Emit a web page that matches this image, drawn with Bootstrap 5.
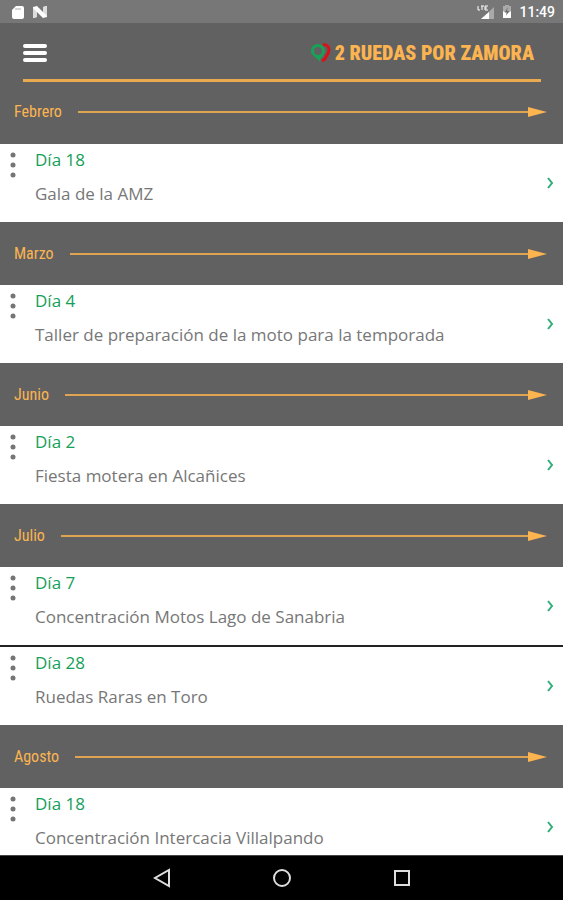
<!DOCTYPE html>
<html lang="es">
<head>
<meta charset="utf-8">
<meta name="viewport" content="width=device-width, initial-scale=1">
<title>2 Ruedas por Zamora</title>
<link href="https://cdn.jsdelivr.net/npm/bootstrap@5.3.0/dist/css/bootstrap.min.css" rel="stylesheet">
<style>
:root { --slate: #616161; --amber: #fbb450; --leaf: #14a057; }
body { font-family: "Open Sans", "Noto Sans", sans-serif; background: var(--slate); }
svg { display: block; flex: none; }
.status { height: 23px; background: #777; font: 500 14px/23px Roboto, sans-serif; padding: 2px 8px 0 11px; }
.app-head { height: 60px; padding: 0 22px 0 23px; background: var(--slate); }
.app-head .top-row { padding: 4px 7px 0 0; }
.rule { height: 3px; background: #e9aa50; }
.brand { color: var(--amber); font: 900 20px/24px "Roboto Condensed", Roboto, sans-serif; }
.month { height: 63px; padding: 0 16px 0 14px; background: var(--slate); color: var(--amber); }
.month:first-child { height: 62px; padding-bottom: 2px; }
.month h2 { font: 400 16px/24px "Roboto Condensed", Roboto, sans-serif; }
.arrow-line { height: 2px; background: #dea452; }
.event { height: 78px; background: #fff; }
.event + .event { height: 80px; border-top: 2px solid #222; }
.kebab { width: 35px; padding: 8px 0 0 10px; color: #757575; }
.event-link { padding: 4px 9px 0 0; color: #777; font-size: 17px; line-height: 24px; }
.event-text { gap: 10px; }
.event-link svg { margin-bottom: 4px; }
.day { color: var(--leaf); }
.sysnav { height: 45px; gap: 102px; background: #000; border-top: 1px solid #444; }
</style>
</head>
<body>
<div class="vh-100 d-flex flex-column overflow-hidden">
  <div class="status d-flex align-items-center text-white">
    <svg width="14" height="16" viewBox="0 0 14 16" aria-hidden="true"><path d="M5 1h6q2 0 2 2v9q0 2-2 2H3q-2 0-2-2V5z" fill="#fff"/><path d="M5 3v2M7 3v2M9 3v2" stroke="#aaa"/></svg>
    <svg class="ms-2" width="15" height="16" viewBox="0 0 15 16" aria-hidden="true"><path d="M0 2l4-1 6 6V2l4-1v11l-4 1-6-6v5l-4 1z" fill="#fff"/><path d="M0 3l4 4v5l-4 1zM10 2l4-1v10l-4-4z" fill="#ddd"/></svg>
    <svg class="ms-auto" width="18" height="16" viewBox="0 0 18 16" aria-hidden="true"><path d="M17 2v12H4z" fill="#aaa"/><path d="M12 7v7H4z" fill="#fff"/><path d="M1 1v4h2M4 1h3M5 1v4M11 1H8v4h3M8 3h2" fill="none" stroke="#fff"/></svg>
    <svg class="mx-1" width="16" height="15" viewBox="-1 0 12 15" aria-hidden="true"><path d="M3 0h4v1h2v12H1V1h2z" fill="#aaa"/><path d="M1 6l4 3 4-3v7H1z" fill="#fff"/><path d="M6 2L3 7h2l-1 4 3-5H5z" fill="#666"/></svg>
    <span>11:49</span>
  </div>

  <header class="app-head d-flex flex-column">
    <div class="top-row d-flex flex-fill align-items-center justify-content-between">
      <button type="button" class="btn p-0 border-0" aria-label="Menú">
        <svg width="24" height="20" viewBox="0 0 24 20"><path d="M2 3h20M2 10h20M2 17h20" stroke="#fff" stroke-width="4" stroke-linecap="round"/></svg>
      </button>
      <a href="#" class="brand d-flex align-items-center text-decoration-none">
        <svg class="me-1" width="20" height="20" viewBox="0 0 20 20" aria-hidden="true"><path d="M12 2c4-1 6 2 6 5 0 4-3 5-4 9l-3 2" fill="none" stroke="#dc1118" stroke-width="3"/><path fill-rule="evenodd" d="M7 1c4 0 7 3 7 7 0 5-5 5-5 11C6 14 0 13 0 8c0-4 3-7 7-7zm0 3a4 4 0 1 0 0 8 4 4 0 0 0 0-8z" fill="#16a355"/></svg>
        <span>2 RUEDAS POR ZAMORA</span>
      </a>
    </div>
    <div class="rule"></div>
  </header>

  <main class="flex-fill overflow-hidden" id="agenda"></main>

  <nav class="sysnav d-flex flex-shrink-0 align-items-center justify-content-center" aria-label="Sistema">
    <button type="button" class="btn p-0 border-0" aria-label="Atrás"><svg width="18" height="20" viewBox="0 0 18 20"><path d="M16 2v16L2 10z" fill="none" stroke="#ddd" stroke-width="2"/></svg></button>
    <button type="button" class="btn p-0 border-0" aria-label="Inicio"><svg width="18" height="20" viewBox="0 0 18 20"><circle cx="9" cy="10" r="8" fill="none" stroke="#ddd" stroke-width="2"/></svg></button>
    <button type="button" class="btn p-0 border-0" aria-label="Recientes"><svg width="18" height="20" viewBox="0 0 18 20"><path d="M2 3h14v14H2z" fill="none" stroke="#ddd" stroke-width="2"/></svg></button>
  </nav>
</div>

<script src="https://cdn.jsdelivr.net/npm/bootstrap@5.3.0/dist/js/bootstrap.bundle.min.js"></script>
<script>
const months = [
  ["Febrero", [["Día 18", "Gala de la AMZ"]]],
  ["Marzo", [["Día 4", "Taller de preparación de la moto para la temporada"]]],
  ["Junio", [["Día 2", "Fiesta motera en Alcañices"]]],
  ["Julio", [["Día 7", "Concentración Motos Lago de Sanabria"], ["Día 28", "Ruedas Raras en Toro"]]],
  ["Agosto", [["Día 18", "Concentración Intercacia Villalpando"]]]
];
const event = ([day, title]) => `
  <article class="event d-flex">
    <button type="button" class="kebab btn border-0 rounded-0 d-flex align-items-start" aria-label="Opciones de ${title}">
      <svg width="6" height="26" viewBox="0 0 6 26" fill="currentColor"><circle cx="3" cy="3" r="2.500"/><circle cx="3" cy="13" r="2.500"/><circle cx="3" cy="23" r="2.500"/></svg>
    </button>
    <a href="#" class="event-link d-flex flex-fill text-decoration-none">
      <span class="event-text d-flex flex-column flex-fill"><span class="day">${day}</span><span>${title}</span></span>
      <svg class="align-self-center" width="8" height="12" viewBox="0 0 8 12" aria-hidden="true"><path d="M2 1l4 5-4 5" fill="none" stroke="#30ad78" stroke-width="2"/></svg>
    </a>
  </article>`;
document.getElementById("agenda").innerHTML = months.map(([name, events]) => `
  <div class="month d-flex align-items-center">
    <h2 class="m-0 me-3">${name}</h2>
    <div class="arrow-line flex-fill"></div>
    <svg width="19" height="10" viewBox="0 0 19 10" aria-hidden="true"><path d="M0 0l19 5-19 5z" fill="#fbb450"/></svg>
  </div>${events.map(event).join("")}`).join("");
</script>
</body>
</html>
